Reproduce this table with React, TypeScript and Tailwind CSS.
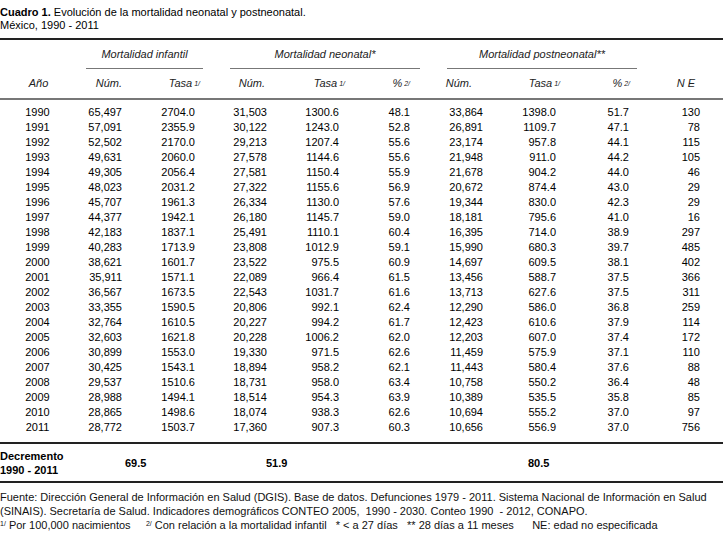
const rows: [string, string, string, string, string, string, string, string, string, string][] = [
  ["1990", "65,497", "2704.0", "31,503", "1300.6", "48.1", "33,864", "1398.0", "51.7", "130"],
  ["1991", "57,091", "2355.9", "30,122", "1243.0", "52.8", "26,891", "1109.7", "47.1", "78"],
  ["1992", "52,502", "2170.0", "29,213", "1207.4", "55.6", "23,174", "957.8", "44.1", "115"],
  ["1993", "49,631", "2060.0", "27,578", "1144.6", "55.6", "21,948", "911.0", "44.2", "105"],
  ["1994", "49,305", "2056.4", "27,581", "1150.4", "55.9", "21,678", "904.2", "44.0", "46"],
  ["1995", "48,023", "2031.2", "27,322", "1155.6", "56.9", "20,672", "874.4", "43.0", "29"],
  ["1996", "45,707", "1961.3", "26,334", "1130.0", "57.6", "19,344", "830.0", "42.3", "29"],
  ["1997", "44,377", "1942.1", "26,180", "1145.7", "59.0", "18,181", "795.6", "41.0", "16"],
  ["1998", "42,183", "1837.1", "25,491", "1110.1", "60.4", "16,395", "714.0", "38.9", "297"],
  ["1999", "40,283", "1713.9", "23,808", "1012.9", "59.1", "15,990", "680.3", "39.7", "485"],
  ["2000", "38,621", "1601.7", "23,522", "975.5", "60.9", "14,697", "609.5", "38.1", "402"],
  ["2001", "35,911", "1571.1", "22,089", "966.4", "61.5", "13,456", "588.7", "37.5", "366"],
  ["2002", "36,567", "1673.5", "22,543", "1031.7", "61.6", "13,713", "627.6", "37.5", "311"],
  ["2003", "33,355", "1590.5", "20,806", "992.1", "62.4", "12,290", "586.0", "36.8", "259"],
  ["2004", "32,764", "1610.5", "20,227", "994.2", "61.7", "12,423", "610.6", "37.9", "114"],
  ["2005", "32,603", "1621.8", "20,228", "1006.2", "62.0", "12,203", "607.0", "37.4", "172"],
  ["2006", "30,899", "1553.0", "19,330", "971.5", "62.6", "11,459", "575.9", "37.1", "110"],
  ["2007", "30,425", "1543.1", "18,894", "958.2", "62.1", "11,443", "580.4", "37.6", "88"],
  ["2008", "29,537", "1510.6", "18,731", "958.0", "63.4", "10,758", "550.2", "36.4", "48"],
  ["2009", "28,988", "1494.1", "18,514", "954.3", "63.9", "10,389", "535.5", "35.8", "85"],
  ["2010", "28,865", "1498.6", "18,074", "938.3", "62.6", "10,694", "555.2", "37.0", "97"],
  ["2011", "28,772", "1503.7", "17,360", "907.3", "60.3", "10,656", "556.9", "37.0", "756"],
];

const cols = "grid grid-cols-[75px_62px_73px_72px_72px_71px_73px_73px_73px_1fr]";

function Sup({ children }: { children: string }) {
  return <sup className="text-[7px] relative -top-[1px] ml-[2px]">{children}</sup>;
}

export default function App() {
  return (
    <div className="w-[723px] h-[536px] bg-white text-black text-[11px] leading-[13px] font-['Liberation_Sans',Arial,sans-serif] overflow-hidden">
      {/* Title */}
      <div className="pt-[6px]">
        <div>
          <span className="font-bold">Cuadro 1.</span> Evolución de la mortalidad neonatal y postneonatal.
        </div>
        <div>México, 1990 - 2011</div>
      </div>

      {/* Header */}
      <div className="mt-[6px] border-t-2 border-[#222] italic text-[#222]">
        <div className={`${cols} h-[29px]`}>
          <div />
          <div className="col-span-2 flex flex-col pl-[11px] pr-[7px]">
            <div className="flex-1 flex items-center justify-center">Mortalidad infantil</div>
            <div className="border-b border-[#777]" />
          </div>
          <div className="col-span-3 flex flex-col pl-[20px] pr-[5px]">
            <div className="flex-1 flex items-center justify-center">Mortalidad neonatal*</div>
            <div className="border-b border-[#777]" />
          </div>
          <div className="col-span-3 flex flex-col pl-[22px] pr-[7px]">
            <div className="flex-1 flex items-center justify-center">Mortalidad postneonatal**</div>
            <div className="border-b border-[#777]" />
          </div>
          <div />
        </div>
        <div className={`${cols} h-[31px] items-center border-b-2 border-[#777]`}>
          <div className="text-center pl-[2px]">Año</div>
          <div className="text-right pr-[15px]">Núm.</div>
          <div className="text-right pr-[10px]">Tasa<Sup>1/</Sup></div>
          <div className="text-right pr-[17px]">Núm.</div>
          <div className="text-right pr-[9px]">Tasa<Sup>1/</Sup></div>
          <div className="text-right pr-[15px]">%<Sup>2/</Sup></div>
          <div className="text-right pr-[26px]">Núm.</div>
          <div className="text-right pr-[11px]">Tasa<Sup>1/</Sup></div>
          <div className="text-right pr-[14px]">%<Sup>2/</Sup></div>
          <div className="text-right pr-[28px]">N E</div>
        </div>
      </div>

      {/* Body */}
      <div className="pt-[5px] pb-[7px] border-b-2 border-[#222]">
        {rows.map((r) => (
          <div key={r[0]} className={`${cols} h-[15px] items-center`}>
            <div className="text-center">{r[0]}</div>
            {r.slice(1).map((v, i) => (
              <div key={i} className={`text-right ${i === 8 ? "pr-[23px]" : "pr-[15px]"}`}>
                {v}
              </div>
            ))}
          </div>
        ))}
      </div>

      {/* Decremento */}
      <div className="flex items-center h-[39px] border-b-2 border-[#222] font-bold leading-[14px]">
        <div className="w-[125px]">
          Decremento
          <br />
          1990 - 2011
        </div>
        <div className="w-[141px]">69.5</div>
        <div className="w-[262px]">51.9</div>
        <div>80.5</div>
      </div>

      {/* Notes */}
      <div className="pt-[7px] leading-[14px] text-[#111]">
        <div>
          Fuente: Dirección General de Información en Salud (DGIS). Base de datos. Defunciones 1979 - 2011. Sistema Nacional de Información en Salud
        </div>
        <div>
          (SINAIS). Secretaría de Salud. Indicadores demográficos CONTEO 2005,&nbsp; 1990 - 2030. Conteo 1990&nbsp; - 2012, CONAPO.
        </div>
        <div className="whitespace-pre">
          <sup className="text-[7px]">1/</sup> Por 100,000 nacimientos{"     "}
          <sup className="text-[7px]">2/</sup> Con relación a la mortalidad infantil{"   "}* &lt; a 27 días{"   "}** 28 días a 11 meses{"      "}NE: edad no especificada
        </div>
      </div>
    </div>
  );
}
